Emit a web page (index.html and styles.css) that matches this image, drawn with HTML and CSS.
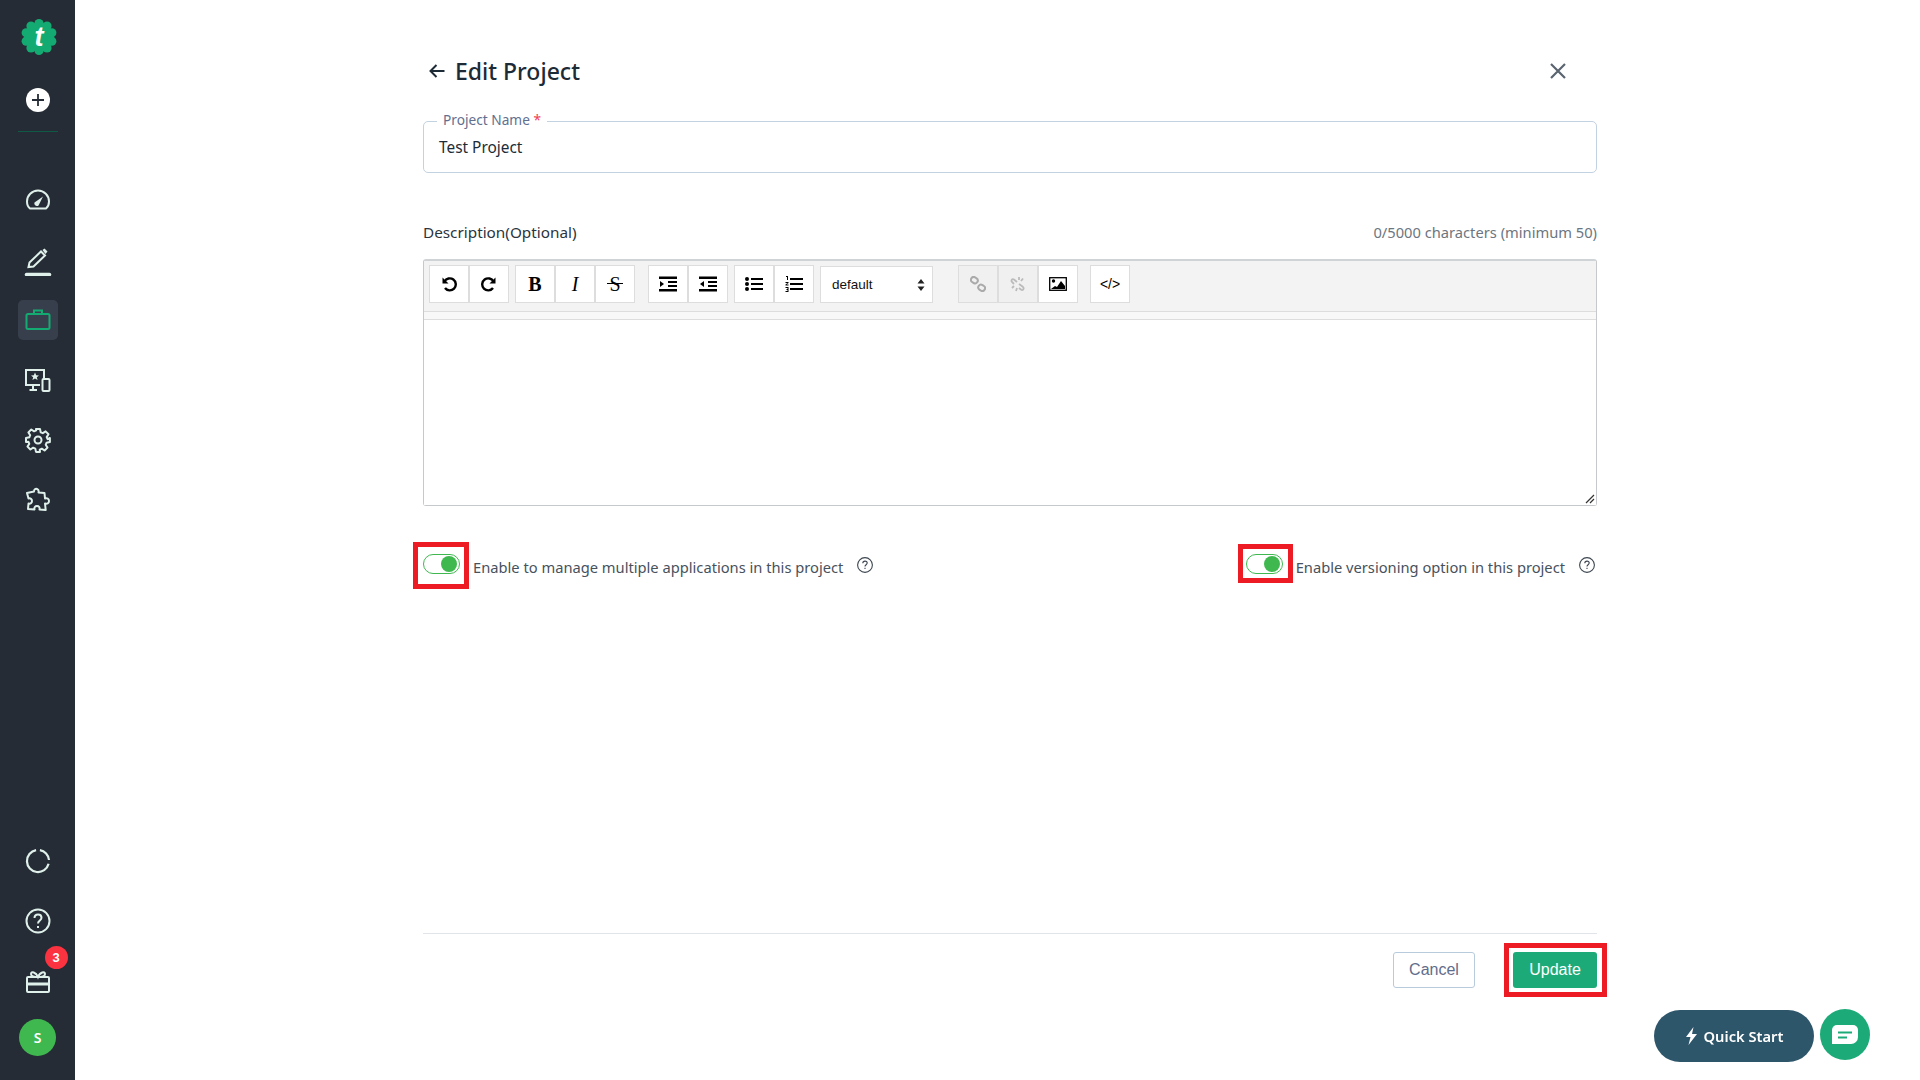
FILE: index.html
```html
<!DOCTYPE html>
<html lang="en">
<head>
<meta charset="utf-8">
<title>Edit Project</title>
<link rel="stylesheet" href="styles.css">
</head>
<body>
<div class="app">
  <aside class="sidebar">
    <div class="side-top">
      <div class="logo">
        <svg width="40" height="38" viewBox="0 0 40 38">
          <g fill="#14ab73">
            <circle cx="21" cy="19" r="14.500"/>
            <circle cx="21" cy="5.500" r="4.600"/>
            <circle cx="29" cy="8.100" r="4.600"/>
            <circle cx="33.800" cy="14.800" r="4.600"/>
            <circle cx="33.800" cy="23.200" r="4.600"/>
            <circle cx="29" cy="29.900" r="4.600"/>
            <circle cx="21" cy="32.500" r="4.600"/>
            <circle cx="13" cy="29.900" r="4.600"/>
            <circle cx="8.200" cy="23.200" r="4.600"/>
            <circle cx="8.200" cy="14.800" r="4.600"/>
            <circle cx="13" cy="8.100" r="4.600"/>
          </g>
          <text x="21" y="28" class="logo-t">t</text>
        </svg>
      </div>
      <div class="add-btn">
        <svg width="24" height="24" viewBox="0 0 24 24"><circle cx="12" cy="12" r="12" fill="#fff"/><path d="M12 6v12M6 12h12" stroke="#252c35" stroke-width="1.800"/></svg>
      </div>
      <div class="side-rule"></div>
      <nav class="side-nav">
        <a class="nav-item"><svg width="26" height="26" viewBox="0 0 26 26" class="ico"><path d="M5 21.500H21C23 20 24 17 24 14.500A11 11 0 0 0 2 14.500C2 17 3 20 5 21.500z"/><path class="solid" d="M9.500 15.500L18 9.500 13.500 18.500C12 20 8.500 18 9.500 15.500z"/></svg></a>
        <a class="nav-item"><svg width="28" height="32" viewBox="0 -4 28 32" class="ico"><path d="M4.500 19L5.500 14.500 17 3.500 21 7.500 9.500 18.500z"/><path class="solid" d="M18.500 2L20.500.5 23.500 3.500 21.500 6z"/><path d="M2.500 26.500h23" stroke-width="3.500" stroke-linecap="round"/></svg></a>
        <a class="nav-item active"><span class="tile"><svg width="26" height="26" viewBox="0 0 26 26" class="ico green"><rect x="1.500" y="7" width="23" height="15" rx="1.500"/><path d="M9 7V3.500h8V7"/></svg></span></a>
        <a class="nav-item"><svg width="28" height="28" viewBox="0 0 28 28" class="ico"><path d="M20 13V4H2v15h14M9 19v4M5.500 24H13"/><rect x="18.500" y="13" width="7" height="12" rx="1"/><path class="solid" d="M11 6.500l1.200 2.700 2.800.2-2.200 1.800.8 2.800-2.600-1.600-2.600 1.600.8-2.800L7 9.400l2.800-.2z"/></svg></a>
        <a class="nav-item"><svg width="26" height="26" viewBox="0 0 26 26" class="ico"><circle cx="13" cy="13" r="3.500"/><path d="M11 2h4l.7 3.300 2.100.9 2.800-1.800 2.900 2.900-1.800 2.800.9 2.100L24.900 11v4l-3.300.7-.9 2.100 1.800 2.800-2.900 2.900-2.800-1.800-2.100.9L15 24.900h-4l-.7-3.300-2.100-.9-2.800 1.800-2.900-2.900 1.800-2.800-.9-2.100L1 15v-4l3.300-.7.9-2.100-1.800-2.800 2.900-2.900 2.800 1.800 2.100-.9z" stroke-linejoin="round"/></svg></a>
        <a class="nav-item"><svg width="26" height="26" viewBox="0 0 26 26" class="ico"><path stroke-linejoin="round" d="M9 4.500c0-2 1.500-3 3-2.500s2 1.500 1.500 3.500l6 .5.500 5.500c2-.5 4 0 4 2.500s-2 3-4 2.500l.7 6.500-6.200-.5c.5-2-.5-3.500-2.500-3.500s-3 1.500-2.500 3.500L3 22l.5-5.500c2 .5 3.500-.5 3.500-2.500S5.500 11 3.500 11.500L2 6z"/></svg></a>
      </nav>
    </div>
    <div class="side-bottom">
      <a class="nav-item"><svg width="26" height="26" viewBox="0 0 26 26" class="ico"><path d="M23.600 15.800A11 11 0 1 1 11.100 2.200M14.900 2.200A11 11 0 0 1 24 12" stroke-width="2.200"/></svg></a>
      <a class="nav-item"><svg width="26" height="26" viewBox="0 0 26 26" class="ico"><circle cx="13" cy="13" r="11.500"/><path d="M9.500 10c0-2 1.500-3.500 3.500-3.500s3.500 1.300 3.500 3.300c0 2.700-3.500 2.700-3.500 5.700"/><path d="M13 18v2"/></svg></a>
      <a class="nav-item gift"><svg width="26" height="26" viewBox="0 0 26 26" class="ico"><rect x="2" y="9" width="22" height="15" rx="1"/><path d="M2 16h22" stroke-width="3"/><path d="M13 9c-2-5-7-6-7-3s4 3 7 3c3 0 7 0 7-3s-5-2-7 3z"/></svg><span class="badge">3</span></a>
      <div class="avatar">S</div>
    </div>
  </aside>

  <main class="main">
    <header class="head">
      <div class="head-title">
        <svg width="18" height="18" viewBox="0 0 18 18"><path d="M16.500 9H2.500M8.500 3l-6 6 6 6" fill="none" stroke="#1d2b36" stroke-width="2"/></svg>
        <h1>Edit Project</h1>
      </div>
      <svg class="close" width="18" height="18" viewBox="0 0 18 18"><path d="M2 2l14 14M16 2L2 16" stroke="#5b6570" stroke-width="2.200" fill="none"/></svg>
    </header>

    <div class="field">
      <span class="field-label">Project Name <em>*</em></span>
      <span class="field-value">Test Project</span>
    </div>

    <div class="desc-row">
      <span class="desc-label">Description(Optional)</span>
      <span class="desc-count">0/5000 characters (minimum 50)</span>
    </div>

    <section class="editor">
      <div class="toolbar">
        <div class="group">
          <button class="tb"><svg width="16" height="16" viewBox="0 0 16 16" class="tbi"><path d="M3.500 5.500A6 6 0 1 1 4 12"/><path class="fill" d="M1.500 1.500v6h6z"/></svg></button>
          <button class="tb"><svg width="16" height="16" viewBox="0 0 16 16" class="tbi"><path d="M12.500 5.500A6 6 0 1 0 12 12"/><path class="fill" d="M14.500 1.500v6h-6z"/></svg></button>
        </div>
        <div class="group">
          <button class="tb tb-b">B</button>
          <button class="tb tb-i">I</button>
          <button class="tb tb-s">S</button>
        </div>
        <div class="group wide">
          <button class="tb"><svg width="18" height="16" viewBox="0 0 18 16"><path d="M0 .5h18v2.500H0zM9 5h9v2H9zM9 9h9v2H9zM0 13h18v2.500H0z"/><path d="M1 5l4 3-4 3z"/></svg></button>
          <button class="tb"><svg width="18" height="16" viewBox="0 0 18 16"><path d="M0 .5h18v2.500H0zM9 5h9v2H9zM9 9h9v2H9zM0 13h18v2.500H0z"/><path d="M5 5L1 8l4 3z"/></svg></button>
        </div>
        <div class="group">
          <button class="tb"><svg width="18" height="16" viewBox="0 0 18 16"><circle cx="2" cy="3" r="2"/><circle cx="2" cy="8" r="2"/><circle cx="2" cy="13" r="2"/><path d="M6 2h12v2H6zM6 7h12v2H6zM6 12h12v2H6z"/></svg></button>
          <button class="tb"><svg width="18" height="16" viewBox="0 0 18 16"><path d="M1 0h2v4H2V1H1zM.5 6h3v1l-2 1.500h2v1H.5v-1l2-1.500h-2zM.5 11h3v5h-3v-1h2v-1h-1v-1h1v-1h-2z"/><path d="M5 2h13v2H5zM5 7h13v2H5zM5 12h13v2H5z"/></svg></button>
        </div>
        <div class="select"><span>default</span><svg width="8" height="14" viewBox="0 0 8 14"><path d="M4 1l3.500 4.500h-7zM4 13l3.500-4.500h-7z" fill="#222"/></svg></div>
        <div class="group links">
          <button class="tb off"><svg width="16" height="16" viewBox="0 0 16 16" fill="none" stroke="#aaa" stroke-width="2"><rect x="1" y="1.500" width="7" height="5.500" rx="2.700" transform="rotate(35 4.500 4)"/><rect x="8" y="9" width="7" height="5.500" rx="2.700" transform="rotate(35 11.500 12)"/></svg></button>
          <button class="tb off"><svg width="16" height="16" viewBox="0 0 16 16" fill="none" stroke="#bbb" stroke-width="1.800"><path d="M7 6L4 3.500C2 2.500 .8 4.500 2 6l2 2M9 8l3.500 2.500c2 1.500 1 4-1 3.500L9 12M9 1v3M13 2.500L11 5M2 12l2-2M6 15l1-3"/></svg></button>
          <button class="tb"><svg width="18" height="14" viewBox="0 0 18 14"><rect x=".7" y=".7" width="16.600" height="12.600" fill="none" stroke="#000" stroke-width="1.300"/><circle cx="4.500" cy="4" r="1.700"/><path d="M2 12l4-3 2 1 4-6 4 5v3z"/></svg></button>
        </div>
        <div class="group code">
          <button class="tb tb-code">&lt;/&gt;</button>
        </div>
      </div>
      <div class="toolbar-gap"></div>
      <div class="edit-area">
        <svg class="grip" width="10" height="10" viewBox="0 0 10 10"><path d="M1 9l8-8M5 9l4-4" stroke="#333" stroke-width="1.200"/></svg>
      </div>
    </section>

    <div class="toggles">
      <div class="opt">
        <span class="switch"><i class="knob"></i><span class="mark mark-a"></span></span>
        <span class="opt-text">Enable to manage multiple applications in this project</span>
        <svg class="help" width="16" height="16" viewBox="0 0 16 16" fill="none" stroke="#3c4650" stroke-width="1.100"><circle cx="8" cy="8" r="7.400"/><path d="M5.800 6.200c0-1.200 1-2.100 2.200-2.100s2.200.8 2.200 2c0 1.700-2.200 1.700-2.200 3.400M8 10.800v1.300"/></svg>
      </div>
      <div class="opt">
        <span class="switch"><i class="knob"></i><span class="mark mark-b"></span></span>
        <span class="opt-text">Enable versioning option in this project</span>
        <svg class="help" width="16" height="16" viewBox="0 0 16 16" fill="none" stroke="#3c4650" stroke-width="1.100"><circle cx="8" cy="8" r="7.400"/><path d="M5.800 6.200c0-1.200 1-2.100 2.200-2.100s2.200.8 2.200 2c0 1.700-2.200 1.700-2.200 3.400M8 10.800v1.300"/></svg>
      </div>
    </div>

    <footer class="foot">
      <button class="btn btn-cancel">Cancel</button>
      <span class="update-wrap">
        <button class="btn btn-update">Update</button>
        <span class="mark mark-c"></span>
      </span>
    </footer>
  </main>
</div>

<div class="float">
  <button class="quick"><svg width="13" height="18" viewBox="0 0 13 18"><path fill="#fff" d="M8.500 0L1 10h4.500L3.500 18 12 7H7z"/></svg>Quick Start</button>
  <button class="chat"><svg width="26" height="20" viewBox="0 0 26 20"><path fill="#fff" d="M5 0h16a5 5 0 0 1 5 5v7a7 7 0 0 1-7 7H0V5a5 5 0 0 1 5-5z"/><path d="M6 7.500h14M6 12.500h9" stroke="#1cab78" stroke-width="1.800"/></svg></button>
</div>
</body>
</html>
```

FILE: styles.css
```css
* { box-sizing: border-box; }
html, body { margin: 0; height: 100%; background: #fff; }
body { font-family: "Noto Sans", "Open Sans", sans-serif; color: #1d2b36; overflow: hidden; }
.app { display: flex; height: 1080px; }

.sidebar { width: 75px; flex: none; background: #252c35; display: flex; flex-direction: column; justify-content: space-between; padding-bottom: 24px; }
.side-top, .side-bottom { display: flex; flex-direction: column; align-items: center; }
.logo { height: 38px; margin-top: 18px; }
.logo-t { font-family: "Liberation Sans", sans-serif; font-weight: bold; font-style: italic; font-size: 27px; fill: #fff; text-anchor: middle; }
.add-btn { height: 24px; margin-top: 32px; }
.side-rule { width: 40px; height: 1px; background: #0f5a45; margin-top: 19px; }
.side-nav { display: flex; flex-direction: column; align-items: center; margin-top: 38px; }
.nav-item { width: 60px; height: 60px; display: flex; align-items: center; justify-content: center; position: relative; }
.tile { width: 40px; height: 40px; border-radius: 5px; background: #383f4c; display: flex; align-items: center; justify-content: center; }
.ico { fill: none; stroke: #dff0ea; stroke-width: 2; }
.ico .solid { fill: #dff0ea; stroke: none; }
.ico.green { stroke: #14ab73; }
.badge { position: absolute; left: 37px; top: -5px; width: 23px; height: 23px; border-radius: 50%; background: #fb3340; color: #fff; font: bold 13px/23px "Liberation Sans", sans-serif; text-align: center; }
.avatar { width: 37px; height: 37px; border-radius: 50%; background: #3fb94f; color: #fff; font-weight: 600; font-size: 14px; line-height: 37px; text-align: center; margin-top: 8px; }

.main { width: 1174px; margin-left: 348px; height: 1080px; display: flex; flex-direction: column; padding-top: 51px; padding-bottom: 92px; }
.head { height: 40px; display: flex; align-items: center; justify-content: space-between; padding-right: 30px; }
.head-title { display: flex; align-items: center; gap: 9px; padding-left: 5px; }
h1 { margin: 0; font-size: 23px; font-weight: 500; line-height: 40px; }

.field { position: relative; height: 52px; margin-top: 30px; border: 1px solid #c3d2e0; border-radius: 5px; padding: 0 15px; display: flex; align-items: center; }
.field-label { position: absolute; left: 13px; top: -11px; padding: 0 6px; background: #fff; font-size: 13.700px; line-height: 18px; color: #62708f; }
.field-label em { color: #ef4056; font-style: normal; }
.field-value { font-size: 15.400px; color: #1d2b36; padding-top: 1px; }

.desc-row { height: 20px; margin-top: 49px; display: flex; justify-content: space-between; align-items: center; }
.desc-label { font-size: 15.300px; color: #2a3540; }
.desc-count { font-size: 14.700px; color: #6c7680; }

.editor { height: 247px; margin-top: 17px; border: 1px solid #c6c9cc; border-top: 2px solid #d0d3d6; border-radius: 3px; display: flex; flex-direction: column; }
.toolbar { height: 51px; background: #f3f3f3; border-bottom: 1px solid #ddd; display: flex; align-items: flex-start; padding: 4px 0 0 5px; gap: 6px; flex: none; }
.toolbar-gap { height: 8px; background: #f8f8f8; border-bottom: 1px solid #ddd; flex: none; }
.group { display: flex; }
.group.wide { margin-left: 7px; }
.group.links { margin-left: 19px; }
.group.code { margin-left: 6px; }
.tb { position: relative; width: 40px; height: 38px; padding: 0; border: 1px solid #ddd; background: #fff; display: flex; align-items: center; justify-content: center; color: #000; font-size: 13px; }
.tb.off { background: #f0f0f0; }
.tbi { fill: none; stroke: #000; stroke-width: 2.400; }
.tbi .fill { fill: #000; stroke: none; }
.tb-b, .tb-i, .tb-s { font-family: "Liberation Serif", serif; font-size: 20px; }
.tb-b { font-weight: bold; }
.tb-i { font-style: italic; }
.tb-s::after { content: ""; position: absolute; left: 11px; right: 11px; top: 17px; height: 1px; background: #000; }
.tb-code { font-family: "Liberation Sans", sans-serif; font-size: 14px; }
.select { width: 113px; height: 37px; margin-top: 1px; background: #fff; border: 1px solid #ddd; display: flex; align-items: center; justify-content: space-between; padding: 0 7px 0 11px; font: 13.500px "Liberation Sans", sans-serif; color: #111; }
.edit-area { flex: 1; background: #fff; position: relative; }
.grip { position: absolute; right: 1px; bottom: 1px; }

.toggles { height: 20px; margin-top: 48px; display: flex; justify-content: space-between; padding-right: 2px; }
.opt { display: flex; align-items: center; }
.switch { position: relative; width: 37px; height: 20px; border: 1px solid #3fb94f; border-radius: 10px; flex: none; background: #fff; }
.knob { position: absolute; right: 2px; top: 1px; width: 16px; height: 16px; border-radius: 50%; background: #3fb94f; }
.opt-text { margin-left: 13px; font-size: 14.700px; color: #47525d; padding-top: 6px; }
.help { margin-left: 14px; margin-top: 2px; flex: none; }
.mark { position: absolute; border: 5px solid #ed1c24; pointer-events: none; }
.mark-a { left: -11px; right: -10px; top: -13px; bottom: -16px; }
.mark-b { left: -9px; right: -11px; top: -11px; bottom: -10px; }
.mark-c { left: -9px; right: -10px; top: -9px; bottom: -9px; }

.foot { margin-top: auto; border-top: 1px solid #e1e4e8; padding-top: 18px; display: flex; justify-content: flex-end; gap: 38px; }
.btn { height: 36px; font: 16px "Liberation Sans", sans-serif; border-radius: 3px; cursor: pointer; }
.btn-cancel { width: 82px; background: #fff; border: 1px solid #b8cbdd; color: #5f6d8c; }
.btn-update { width: 84px; background: #1cab78; border: 0; color: #fff; display: block; }
.update-wrap { position: relative; display: block; }

.float { position: fixed; left: 1654px; top: 1009px; display: flex; gap: 6px; align-items: flex-start; }
.quick { width: 160px; height: 52px; margin-top: 1px; border: 0; border-radius: 26px; background: #2e566b; color: #fff; font: 600 14.700px "Noto Sans", sans-serif; display: flex; align-items: center; justify-content: center; gap: 6px; }
.chat { width: 50px; height: 51px; padding: 0; border: 0; border-radius: 50%; background: #1cab78; display: flex; align-items: center; justify-content: center; }
```
